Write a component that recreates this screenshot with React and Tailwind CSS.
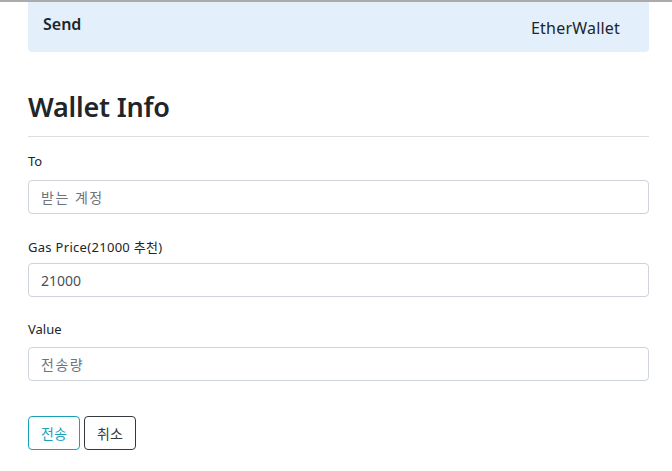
export default function App() {
  return (
    <div className="min-h-[471px] bg-white text-[#212529] font-['Noto_Sans','Noto_Sans_CJK_KR',sans-serif]">
      <div className="h-[2px] bg-[#ababab]" />
      <div className="ml-[28px] w-[621px]">
        <div className="h-[50px] bg-[#e3f0fc] rounded-b-[4px] flex items-center justify-between pl-[15px] pr-[29px]">
          <span className="text-[16px] font-semibold -mt-[7px]">Send</span>
          <span className="text-[16px] mt-[1px] tracking-[0.2px]">EtherWallet</span>
        </div>
        <h2 className="mt-[38px] text-[27px] leading-[34px] font-semibold tracking-[-0.2px]">Wallet Info</h2>
        <div className="mt-[12px] h-px bg-[#dedede]" />
        <label className="block mt-[14px] text-[13px] leading-[21px] font-normal">To</label>
        <input
          className="mt-[8px] block w-full h-[34px] border border-[#ced4da] rounded-[4px] px-[12px] text-[14px] placeholder:text-[#6c757d] placeholder:tracking-[1.5px] outline-none"
          placeholder="받는 계정"
        />
        <label className="block mt-[23px] text-[13px] leading-[21px] font-normal tracking-[0.3px]">Gas Price(21000 추천)</label>
        <input
          className="mt-[5px] block w-full h-[34px] border border-[#ced4da] rounded-[4px] px-[12px] text-[14px] text-[#495057] outline-none"
          defaultValue="21000"
        />
        <label className="block mt-[22px] text-[13px] leading-[21px] font-normal">Value</label>
        <input
          className="mt-[7px] block w-full h-[34px] border border-[#ced4da] rounded-[4px] px-[12px] text-[14px] placeholder:text-[#6c757d] placeholder:tracking-[1.5px] outline-none"
          placeholder="전송량"
        />
        <div className="mt-[35px] flex gap-[4px]">
          <button className="w-[52px] h-[34px] border border-[#17a2b8] text-[#17a2b8] rounded-[4px] text-[14px]">전송</button>
          <button className="w-[52px] h-[34px] border border-[#343a40] text-[#343a40] rounded-[4px] text-[14px]">취소</button>
        </div>
      </div>
    </div>
  );
}
